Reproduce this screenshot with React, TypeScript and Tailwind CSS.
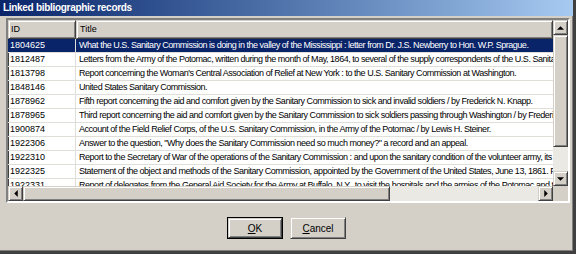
import React from "react";

const ROWS: [string, string][] = [
  ["1804625", "What the U.S. Sanitary Commission is doing in the valley of the Mississippi : letter from Dr. J.S. Newberry to Hon. W.P. Sprague."],
  ["1812487", "Letters from the Army of the Potomac, written during the month of May, 1864, to several of the supply correspondents of the U.S. Sanitary Commission."],
  ["1813798", "Report concerning the Woman's Central Association of Relief at New York : to the U.S. Sanitary Commission at Washington."],
  ["1848146", "United States Sanitary Commission."],
  ["1878962", "Fifth report concerning the aid and comfort given by the Sanitary Commission to sick and invalid soldiers / by Frederick N. Knapp."],
  ["1878965", "Third report concerning the aid and comfort given by the Sanitary Commission to sick soldiers passing through Washington / by Frederick N. Knapp."],
  ["1900874", "Account of the Field Relief Corps, of the U.S. Sanitary Commission, in the Army of the Potomac / by Lewis H. Steiner."],
  ["1922306", "Answer to the question, \"Why does the Sanitary Commission need so much money?\" a record and an appeal."],
  ["1922310", "Report to the Secretary of War of the operations of the Sanitary Commission : and upon the sanitary condition of the volunteer army, its medical staff, hospitals."],
  ["1922325", "Statement of the object and methods of the Sanitary Commission, appointed by the Government of the United States, June 13, 1861. Plan of organization."],
  ["1922331", "Report of delegates from the General Aid Society for the Army at Buffalo, N.Y., to visit the hospitals and the armies of the Potomac and the West."],
];

// classic raised 3D look
const raised =
  "border border-t-[#d4d0c8] border-l-[#d4d0c8] border-r-[#404040] border-b-[#404040] shadow-[inset_1px_1px_#ffffff,inset_-1px_-1px_#808080] bg-[#d4d0c8]";

function Arrow({ dir }: { dir: "up" | "down" | "left" | "right" }) {
  const pts = {
    up: "0,4 4,0 8,4",
    down: "0,0 4,4 8,0",
    left: "4,0 0,4 4,8",
    right: "0,0 4,4 0,8",
  }[dir];
  const vertical = dir === "up" || dir === "down";
  return (
    <svg width={vertical ? 7 : 4} height={vertical ? 4 : 7} viewBox={vertical ? "0 0 8 4" : "0 0 4 8"}>
      <polygon points={pts} fill="#000" />
    </svg>
  );
}

export default function App() {
  return (
    <div className="w-[576px] h-[254px] bg-[#d4d0c8] flex flex-col overflow-hidden font-['Liberation_Sans',Arial,sans-serif] border-r-[3px] border-b-[3px] border-r-[#404040] border-b-[#404040] shadow-[inset_-1px_-1px_#808080]">
      {/* Title bar */}
      <div className="h-[16px] shrink-0 bg-linear-to-r from-[#0a246a] to-[#a6caf0] text-white font-bold text-[10px] tracking-[-0.3px] leading-[16px] pl-[3px] whitespace-nowrap">
        Linked bibliographic records
      </div>

      {/* List */}
      <div className="pt-[2px] pl-[6px]">
        <div className="w-[564px] h-[185px] border-2 border-t-[#808080] border-l-[#808080] border-r-white border-b-white">
          <div className="w-full h-full grid grid-cols-[1fr_15px] grid-rows-[1fr_15px] shadow-[inset_1px_1px_#404040] bg-white">
            <div className="overflow-hidden text-[9px] text-black">
              {/* header */}
              <div className="flex h-[19px]">
                <div className={`w-[68px] shrink-0 pl-[2px] leading-[17px] ${raised}`}>ID</div>
                <div className={`flex-1 pl-[3px] leading-[17px] ${raised}`}>Title</div>
              </div>
              {ROWS.map(([id, title], i) => {
                const sel = i === 0;
                return (
                  <div
                    key={id}
                    className={`flex h-[14px] leading-[13px] whitespace-nowrap border-b border-[#e0ded8] ${
                      sel ? "bg-[#0a246a] text-white" : ""
                    }`}
                  >
                    <div className="w-[68px] shrink-0 pl-[2px] border-r border-[#e0ded8]">{id}</div>
                    <div className="flex-1 pl-[3px] overflow-hidden tracking-[-0.47px]">{title}</div>
                  </div>
                );
              })}
            </div>

            {/* vertical scrollbar */}
            <div className="flex flex-col bg-[#ebe9e4]">
              <div className={`h-[15px] flex items-center justify-center ${raised}`}>
                <Arrow dir="up" />
              </div>
              <div className={`h-[112px] ${raised}`} />
              <div className="flex-1" />
              <div className={`h-[15px] flex items-center justify-center ${raised}`}>
                <Arrow dir="down" />
              </div>
            </div>

            {/* horizontal scrollbar */}
            <div className="flex bg-[#ebe9e4]">
              <div className={`w-[15px] flex items-center justify-center ${raised}`}>
                <Arrow dir="left" />
              </div>
              <div className={`w-[367px] ${raised}`} />
              <div className="flex-1" />
              <div className={`w-[15px] flex items-center justify-center ${raised}`}>
                <Arrow dir="right" />
              </div>
            </div>
            <div className="bg-[#d4d0c8]" />
          </div>
        </div>
      </div>

      {/* Buttons */}
      <div className="flex justify-center gap-[7px] pt-[14px] text-[10px] text-black">
        <div className="w-[56px] h-[22px] border border-black">
          <div className={`w-full h-full flex items-center justify-center ${raised}`}>
            <span>
              <span className="underline">O</span>K
            </span>
          </div>
        </div>
        <div className={`w-[56px] h-[22px] flex items-center justify-center ${raised}`}>
          <span>
            <span className="underline">C</span>ancel
          </span>
        </div>
      </div>
    </div>
  );
}
